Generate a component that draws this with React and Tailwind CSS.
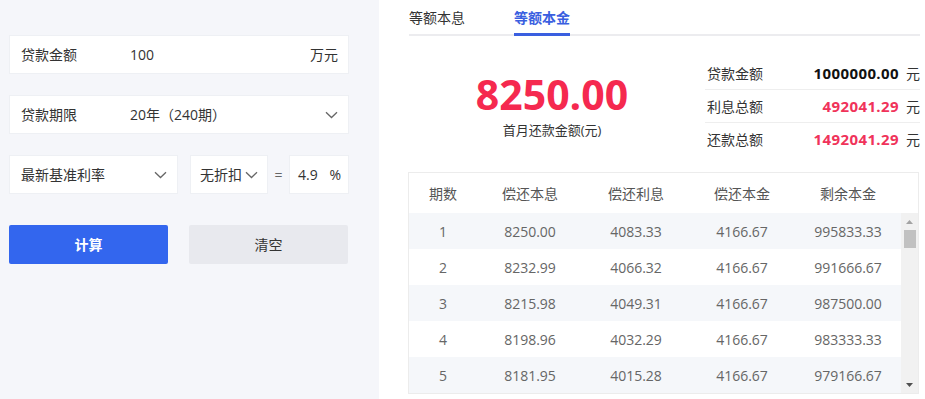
import React from "react";

const FONT = { fontFamily: '"Open Sans", "Noto Sans CJK SC", sans-serif' };

function Chevron({ className = "" }) {
  return (
    <svg className={className} width="13" height="8" viewBox="0 0 13 8" fill="none">
      <path d="M1 1.2 L6.5 6.5 L12 1.2" stroke="#666" strokeWidth="1.3" />
    </svg>
  );
}

const rows = [
  ["1", "8250.00", "4083.33", "4166.67", "995833.33"],
  ["2", "8232.99", "4066.32", "4166.67", "991666.67"],
  ["3", "8215.98", "4049.31", "4166.67", "987500.00"],
  ["4", "8198.96", "4032.29", "4166.67", "983333.33"],
  ["5", "8181.95", "4015.28", "4166.67", "979166.67"],
];

export default function App() {
  return (
    <div style={FONT} className="w-[925px] h-[399px] flex overflow-hidden bg-white text-[14px] text-[#333]">
      {/* Left panel */}
      <div className="w-[379px] h-full bg-[#f5f6fa] pt-[35px] pl-[9px] pr-[30px]">
        <div className="h-[39px] bg-white border border-[#eef0f4] flex items-center pl-[11px] pr-[10px]">
          <span className="w-[109px]">贷款金额</span>
          <span className="flex-1">100</span>
          <span>万元</span>
        </div>
        <div className="mt-[21px] h-[39px] bg-white border border-[#eef0f4] flex items-center pl-[11px] pr-[10px]">
          <span className="w-[109px]">贷款期限</span>
          <span className="flex-1">20年（240期）</span>
          <Chevron />
        </div>
        <div className="mt-[21px] h-[39px] flex items-center">
          <div className="w-[169px] h-full bg-white border border-[#eef0f4] flex items-center justify-between pl-[11px] pr-[10px]">
            <span>最新基准利率</span>
            <Chevron />
          </div>
          <div className="ml-[12px] w-[78px] h-full bg-white border border-[#eef0f4] flex items-center pl-[9px] pr-[6px] gap-[3px]">
            <span>无折扣</span>
            <Chevron />
          </div>
          <div className="w-[21px] text-center text-[#666]">=</div>
          <div className="flex-1 h-full bg-white border border-[#eef0f4] flex items-center justify-between pl-[8px] pr-[7px]">
            <span>4.9</span>
            <span>%</span>
          </div>
        </div>
        <div className="mt-[31px] flex gap-[21px]">
          <button className="w-[159px] h-[39px] rounded-[2px] bg-[#3366ee] text-white text-[14px] font-bold">计算</button>
          <button className="w-[159px] h-[39px] rounded-[2px] bg-[#e8e9ee] text-[#333] text-[14px]">清空</button>
        </div>
      </div>

      {/* Right panel */}
      <div className="flex-1 pl-[30px] pr-[5px]">
        <div className="h-[36px] border-b-2 border-[#ececef] flex items-end gap-[49px]">
          <div className="h-[34px] flex items-center text-[#333]">等额本息</div>
          <div className="h-[34px] flex items-center font-bold text-[#3a5fe0] relative">
            等额本金
            <div className="absolute left-0 right-0 -bottom-[2px] h-[3px] bg-[#3a5fe0]" />
          </div>
        </div>

        <div className="flex h-[136px]">
          <div className="w-[286px] flex flex-col items-center pt-[38px]">
            <div className="text-[41px] leading-[40px] font-bold text-[#f5294f]">8250.00</div>
            <div className="mt-[6px] text-[13px] leading-[20px] text-[#333]">首月还款金额(元)</div>
          </div>
          <div className="ml-[10px] flex-1 pt-[21px]">
            {[
              ["贷款金额", "1000000.00", "text-[#111]"],
              ["利息总额", "492041.29", "text-[#f0335a]"],
              ["还款总额", "1492041.29", "text-[#f0335a]"],
            ].map(([l, v, c], i) => (
              <div key={l} className={`h-[33px] flex items-center pl-[2px] ${i < 2 ? "border-b border-[#eeeeee]" : ""}`}>
                <span className="flex-1">{l}</span>
                <span className={`font-bold text-[15px] tracking-[0.4px] ${c}`}>{v}</span>
                <span className="ml-[7px] w-[14px]">元</span>
              </div>
            ))}
          </div>
        </div>

        <div className="-ml-[1px] w-[511px] border border-[#ececec] text-[#555]">
          <div className="h-[40px] grid grid-cols-[68px_1fr_1fr_1fr_1fr] items-center text-center pr-[17px] bg-white text-[#555]">
            <div>期数</div>
            <div>偿还本息</div>
            <div>偿还利息</div>
            <div>偿还本金</div>
            <div>剩余本金</div>
          </div>
          <div className="flex h-[180px]">
            <div className="flex-1">
              {rows.map((r, i) => (
                <div
                  key={r[0]}
                  className={`h-[36px] grid grid-cols-[68px_1fr_1fr_1fr_1fr] items-center text-center text-[#666] ${i % 2 === 0 ? "bg-[#f5f7fa]" : "bg-white"}`}
                >
                  {r.map((c, j) => (
                    <div key={j}>{c}</div>
                  ))}
                </div>
              ))}
            </div>
            <div className="w-[17px] bg-[#f1f1f1] flex flex-col items-center">
              <div className="h-[17px] flex items-center justify-center">
                <svg width="7" height="4" viewBox="0 0 7 4"><path d="M0 4 L3.5 0 L7 4 Z" fill="#a3a3a3" /></svg>
              </div>
              <div className="w-[12px] h-[18px] bg-[#c1c1c1]" />
              <div className="flex-1" />
              <div className="h-[17px] flex items-center justify-center">
                <svg width="7" height="4" viewBox="0 0 7 4"><path d="M0 0 L3.5 4 L7 0 Z" fill="#505050" /></svg>
              </div>
            </div>
          </div>
        </div>
      </div>
    </div>
  );
}
